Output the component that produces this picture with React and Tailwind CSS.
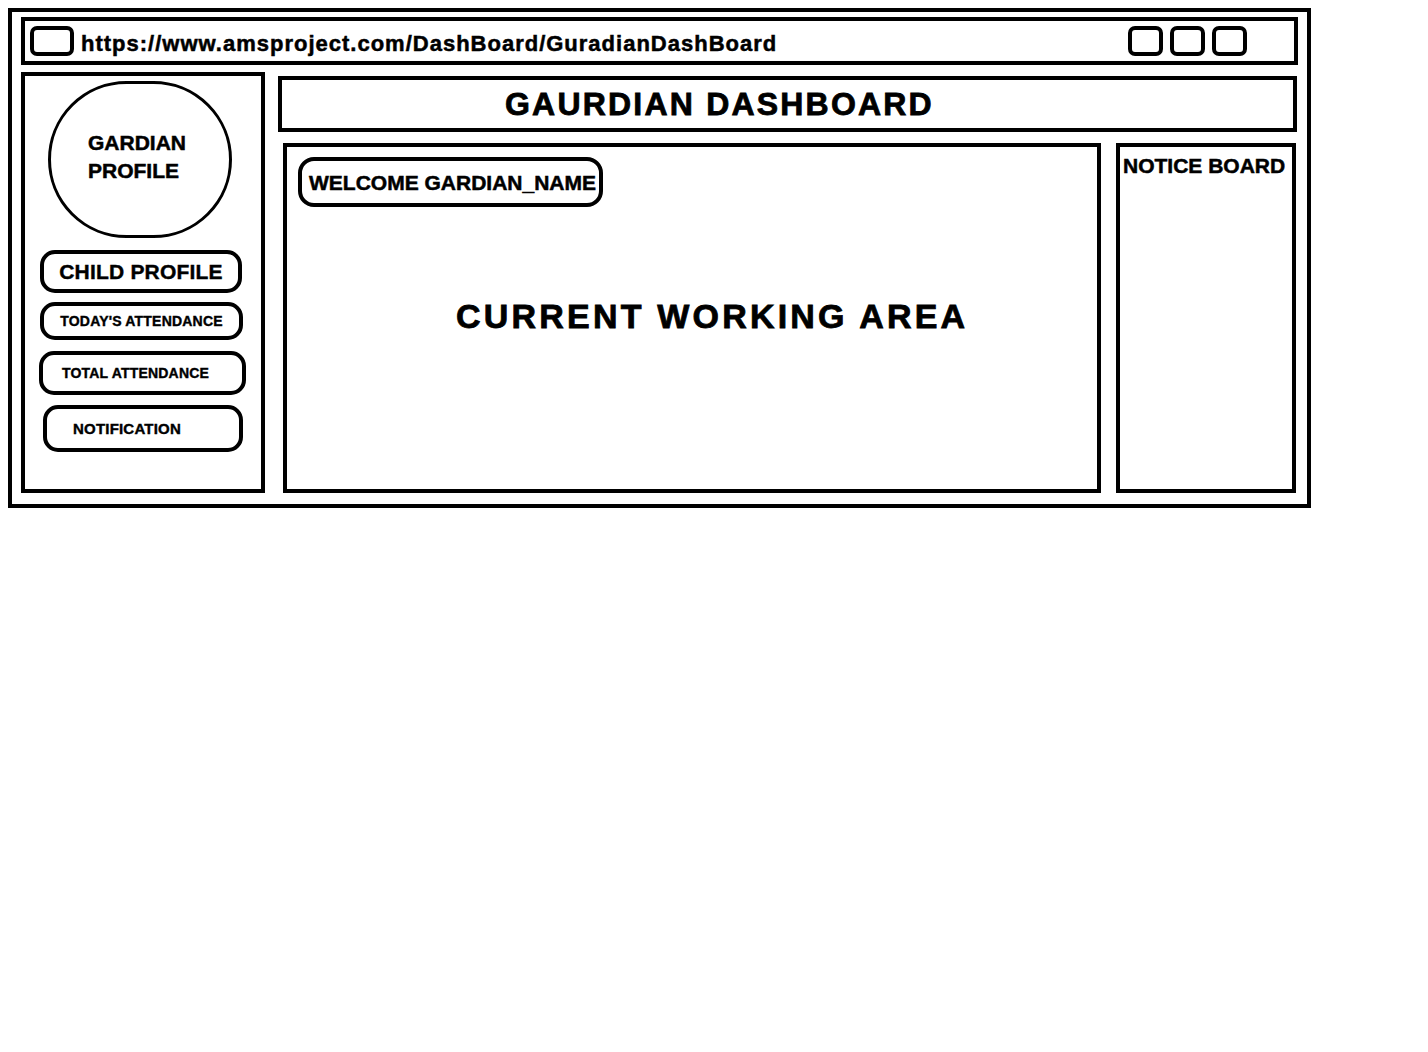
const font = "font-['Liberation_Sans',Arial,sans-serif]";

function NavButton({ label, className, textClass }) {
  return (
    <div className={`border-4 border-black rounded-[15px] flex items-center ${className}`}>
      <span className={`font-bold leading-none tracking-[0.2px] [-webkit-text-stroke:0.4px_black] ${textClass}`}>
        {label}
      </span>
    </div>
  );
}

export default function App() {
  return (
    <div className={`min-h-screen bg-white text-black ${font}`}>
      <div className="ml-[8px] mt-[8px] w-[1303px] h-[500px] border-4 border-black flex flex-col pt-[5px] px-[9px] pb-[11px]">
        {/* address bar */}
        <div className="h-[48px] border-4 border-black flex items-center">
          <div className="ml-[5px] w-[44px] h-[30px] border-4 border-black rounded-[7px]" />
          <span className="ml-[7px] pt-[5px] text-[22px] font-bold tracking-[1px] leading-none [-webkit-text-stroke:0.5px_black]">
            https://www.amsproject.com/DashBoard/GuradianDashBoard
          </span>
          <div className="flex-1" />
          <div className="flex gap-[7px] mr-[47px]">
            <div className="w-[35px] h-[30px] border-4 border-black rounded-[7px]" />
            <div className="w-[35px] h-[30px] border-4 border-black rounded-[7px]" />
            <div className="w-[35px] h-[30px] border-4 border-black rounded-[7px]" />
          </div>
        </div>

        <div className="mt-[7px] flex flex-1 min-h-0">
          {/* sidebar */}
          <div className="w-[244px] border-4 border-black flex flex-col">
            <div className="ml-[23px] mt-[5px] w-[184px] h-[157px] border-[3.5px] border-black rounded-full pt-[45px] pl-[37px]">
              <p className="text-[21px] font-bold leading-[28px] [-webkit-text-stroke:0.5px_black]">GARDIAN</p>
              <p className="text-[21px] font-bold leading-[28px] [-webkit-text-stroke:0.5px_black]">PROFILE</p>
            </div>
            <NavButton
              label="CHILD PROFILE"
              className="ml-[15px] mt-[12px] w-[202px] h-[43px] justify-center"
              textClass="text-[21px]"
            />
            <NavButton
              label="TODAY'S ATTENDANCE"
              className="ml-[15px] mt-[9px] w-[203px] h-[38px] justify-center"
              textClass="text-[14px]"
            />
            <NavButton
              label="TOTAL ATTENDANCE"
              className="ml-[14px] mt-[11px] w-[207px] h-[44px] pl-[19px]"
              textClass="text-[14px]"
            />
            <NavButton
              label="NOTIFICATION"
              className="ml-[18px] mt-[10px] w-[200px] h-[47px] pl-[26px]"
              textClass="text-[15px]"
            />
          </div>

          {/* right column */}
          <div className="ml-[13px] mr-[1px] pt-[4px] flex-1 flex flex-col">
            <div className="h-[56px] border-4 border-black flex items-center pl-[223px]">
              <h1 className="text-[32px] font-bold tracking-[2.2px] leading-none [-webkit-text-stroke:0.8px_black]">
                GAURDIAN DASHBOARD
              </h1>
            </div>
            <div className="mt-[11px] flex flex-1">
              <div className="ml-[5px] w-[818px] border-4 border-black flex flex-col items-start">
                <div className="ml-[11px] mt-[10px] w-[305px] h-[50px] border-4 border-black rounded-[16px] flex items-center pl-[7px]">
                  <span className="text-[21px] font-bold leading-none [-webkit-text-stroke:0.5px_black]">
                    WELCOME GARDIAN_NAME
                  </span>
                </div>
                <h2 className="ml-[169px] mt-[92px] text-[34px] font-bold tracking-[3.2px] leading-none [-webkit-text-stroke:0.8px_black]">
                  CURRENT WORKING AREA
                </h2>
              </div>
              <div className="ml-[15px] w-[180px] border-4 border-black pt-[6px] pl-[3px]">
                <p className="text-[21px] font-bold leading-[25px] [-webkit-text-stroke:0.5px_black]">NOTICE BOARD</p>
              </div>
            </div>
          </div>
        </div>
      </div>
    </div>
  );
}
